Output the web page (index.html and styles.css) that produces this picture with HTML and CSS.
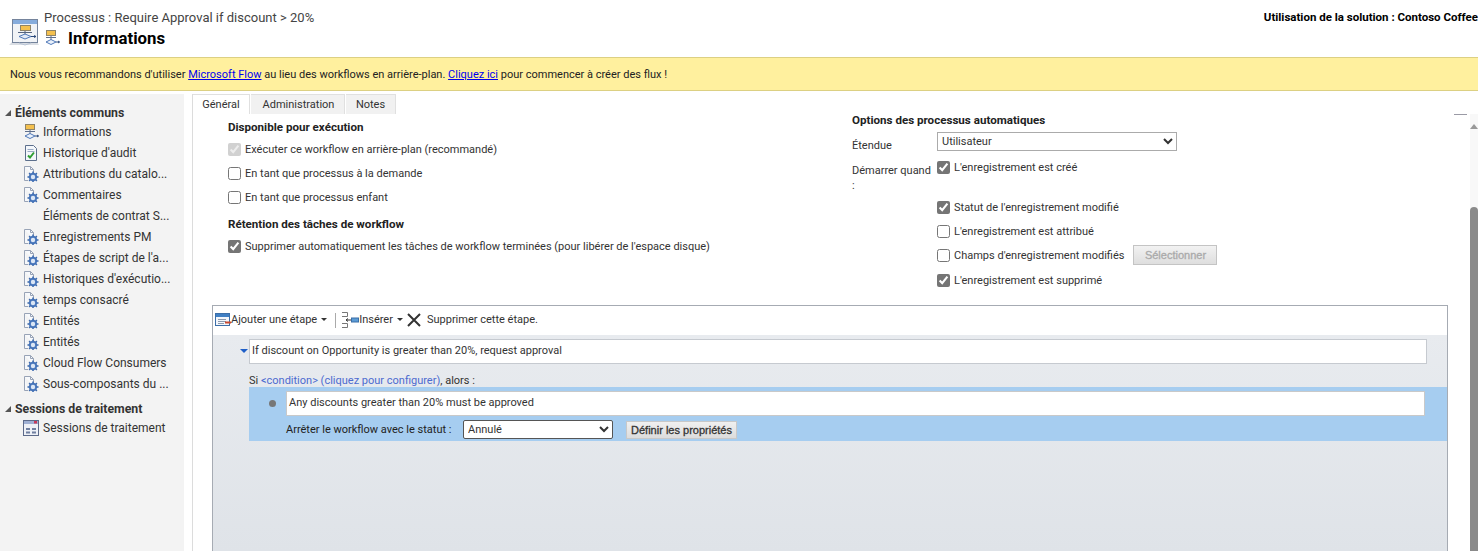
FILE: index.html
```html
<!DOCTYPE html>
<html lang="fr">
<head>
<meta charset="utf-8">
<title>Processus</title>
<link rel="stylesheet" href="styles.css">
</head>
<body>
<svg class="defs" width="0" height="0" aria-hidden="true">
  <symbol id="flow" viewBox="0 0 16 16">
    <rect x="2.500" y="0.500" width="9" height="5" fill="#f4c04e" stroke="#8f8468"/>
    <path d="M7 6v4M2 7.500h10" stroke="#5f6f8c" fill="none"/>
    <path d="M7 9.500l5 2.500-5 2.500-5-2.500z" fill="#eaf1fb" stroke="#4f78b8"/>
    <path d="M12 12h3.500M14 11l1.500 1-1.500 1" stroke="#2c4a7a" fill="none"/>
  </symbol>
  <symbol id="audit" viewBox="0 0 16 16">
    <path d="M2.500 0.500h8l3 3v12h-11z" fill="#f4f7fb" stroke="#5c6f8c"/>
    <path d="M4.500 4.500h6M4.500 6.500h7" stroke="#9aabc4"/>
    <path d="M5 10.500l2 2 4-5" fill="none" stroke="#2f9e32" stroke-width="2"/>
  </symbol>
  <symbol id="gear" viewBox="0 0 16 16">
    <path d="M1.500 0.500h6l3 3v6M5 14.500H1.500v-14" fill="#f7f9fc" stroke="#98a3b6"/>
    <path d="M7.500 0.500v3h3" fill="none" stroke="#98a3b6"/>
    <circle cx="10" cy="11" r="3.200" fill="#dbe6f5" stroke="#4a78bd" stroke-width="2"/>
    <path d="M10 5.500v2M10 14.500v1.500M4.500 11h2M13.500 11h2M6.100 7.100l1.400 1.400M12.500 13.500l1.400 1.400M13.900 7.100l-1.400 1.400M7.500 13.500l-1.400 1.400" stroke="#3a68ad" stroke-width="1.500"/>
  </symbol>
  <symbol id="session" viewBox="0 0 16 16">
    <rect x="0.500" y="0.500" width="15" height="15" fill="#eef1f7" stroke="#5c6a8a"/>
    <rect x="1" y="1" width="14" height="3" fill="#9fb0d4"/>
    <rect x="11" y="1" width="3" height="2.500" fill="#c8395a"/>
    <rect x="3" y="8" width="4" height="2" fill="#6f7fa0"/>
    <rect x="9" y="8" width="4" height="2" fill="#6f7fa0"/>
    <rect x="3" y="11.500" width="4" height="2" fill="#6f7fa0"/>
    <rect x="9" y="11.500" width="4" height="2" fill="#6f7fa0"/>
  </symbol>
</svg>

<header class="page-head">
  <svg class="head-logo" viewBox="0 0 30 30" aria-hidden="true">
    <path d="M0 28l3-3h25l2 3z" fill="#d9dde3"/>
    <rect x="3.500" y="2.500" width="25" height="23" fill="#f1f3f6" stroke="#75849c"/>
    <rect x="4" y="3" width="24" height="4" fill="#86acdc"/>
    <rect x="11.500" y="8.500" width="10" height="5" fill="#f4c04e" stroke="#8f8468"/>
    <path d="M16 14v4M9 15.500h14" stroke="#55647f" fill="none"/>
    <path d="M16 17l6 2.500-6 2.500-6-2.500z" fill="#e3ebf7" stroke="#4f78b8"/>
    <path d="M22 19.500h5M25 18.500l2 1-2 1" stroke="#2c4a7a" fill="none"/>
    <path d="M10 26l6 2 6-2" fill="none" stroke="#b8c4d6"/>
  </svg>
  <div class="head-titles">
    <div class="head-process">Processus : Require Approval if discount &gt; 20%</div>
    <div class="head-form">
      <svg class="ico"><use href="#flow"/></svg>
      <h1>Informations</h1>
    </div>
  </div>
  <div class="head-solution">Utilisation de la solution : Contoso Coffee</div>
</header>

<div class="banner">Nous vous recommandons d'utiliser <a href="#">Microsoft Flow</a> au lieu des workflows en arrière-plan. <a href="#">Cliquez ici</a> pour commencer à créer des flux !</div>

<div class="layout">
  <nav class="side">
    <h2 class="side-head">Éléments communs</h2>
    <ul class="side-list">
      <li><svg class="ico"><use href="#flow"/></svg>Informations</li>
      <li><svg class="ico"><use href="#audit"/></svg>Historique d'audit</li>
      <li><svg class="ico"><use href="#gear"/></svg>Attributions du catalo...</li>
      <li><svg class="ico"><use href="#gear"/></svg>Commentaires</li>
      <li><span class="ico"></span>Éléments de contrat S...</li>
      <li><svg class="ico"><use href="#gear"/></svg>Enregistrements PM</li>
      <li><svg class="ico"><use href="#gear"/></svg>Étapes de script de l'a...</li>
      <li><svg class="ico"><use href="#gear"/></svg>Historiques d'exécutio...</li>
      <li><svg class="ico"><use href="#gear"/></svg>temps consacré</li>
      <li><svg class="ico"><use href="#gear"/></svg>Entités</li>
      <li><svg class="ico"><use href="#gear"/></svg>Entités</li>
      <li><svg class="ico"><use href="#gear"/></svg>Cloud Flow Consumers</li>
      <li><svg class="ico"><use href="#gear"/></svg>Sous-composants du ...</li>
    </ul>
    <h2 class="side-head second">Sessions de traitement</h2>
    <ul class="side-list tight">
      <li><svg class="ico"><use href="#session"/></svg>Sessions de traitement</li>
    </ul>
  </nav>

  <main class="content">
    <div class="tabs">
      <div class="tab tab-general active">Général</div>
      <div class="tab tab-admin">Administration</div>
      <div class="tab tab-notes">Notes</div>
    </div>
    <div class="scroll-area">
      <div class="form">
        <section class="col-left">
          <h3>Disponible pour exécution</h3>
          <label class="chk"><input type="checkbox" checked disabled>Exécuter ce workflow en arrière-plan (recommandé)</label>
          <label class="chk"><input type="checkbox">En tant que processus à la demande</label>
          <label class="chk"><input type="checkbox">En tant que processus enfant</label>
          <h3 class="h-second">Rétention des tâches de workflow</h3>
          <label class="chk"><input type="checkbox" checked>Supprimer automatiquement les tâches de workflow terminées (pour libérer de l'espace disque)</label>
        </section>
        <section class="col-right">
          <h3>Options des processus automatiques</h3>
          <div class="opt-grid">
            <div class="opt-label first">Étendue</div>
            <select class="scope"><option>Utilisateur</option></select>
            <div class="opt-label">Démarrer quand<br>:</div>
            <div class="opt-checks">
              <label class="chk c-created"><input type="checkbox" checked>L'enregistrement est créé</label>
              <label class="chk"><input type="checkbox" checked>Statut de l'enregistrement modifié</label>
              <label class="chk"><input type="checkbox">L'enregistrement est attribué</label>
              <div class="chk-row">
                <label class="chk"><input type="checkbox">Champs d'enregistrement modifiés</label>
                <button class="pick" disabled>Sélectionner</button>
              </div>
              <label class="chk c-last"><input type="checkbox" checked>L'enregistrement est supprimé</label>
            </div>
          </div>
        </section>
      </div>

      <section class="designer">
        <div class="toolbar">
          <span class="tool tool-add">
            <svg class="tool-ico" viewBox="0 0 16 14"><rect x="0.500" y="0.500" width="14" height="12" fill="#f3f6fb" stroke="#3b6ea8"/><rect x="1" y="1" width="13" height="3" fill="#3f7fc4"/><path d="M3 6.500h8M3 8.500h8M3 10.500h6" stroke="#8b99ad"/><path d="M10 9.500h6" stroke="#c9492f" stroke-width="2"/></svg>Ajouter une étape<i class="caret"></i>
          </span>
          <span class="sep"></span>
          <span class="tool">
            <svg class="tool-ico ins" viewBox="0 0 18 16"><path d="M1 0.500h5.500v4H1M1 11.500h5.500v4H1" fill="none" stroke="#777"/><path d="M5 8h5M7 6.500l-2 1.500 2 1.500" fill="none" stroke="#333"/><rect x="10.500" y="6" width="7" height="4" fill="#5b9bd5" stroke="#3b6ea8"/></svg>Insérer<i class="caret"></i>
          </span>
          <span class="tool del">
            <svg class="del-ico" viewBox="0 0 14 14"><path d="M1 1l12 12M13 1L1 13" stroke="#333" stroke-width="2" fill="none"/></svg>Supprimer cette étape.
          </span>
        </div>
        <div class="canvas">
          <div class="stage-row">
            <i class="expand"></i>
            <div class="field stage">If discount on Opportunity is greater than 20%, request approval</div>
          </div>
          <div class="cond">Si <span class="cond-link">&lt;condition&gt; (cliquez pour configurer)</span>, alors :</div>
          <div class="action">
            <div class="action-top">
              <i class="bullet"></i>
              <div class="field action-name">Any discounts greater than 20% must be approved</div>
            </div>
            <div class="action-bottom">
              <span class="status-label">Arrêter le workflow avec le statut :</span>
              <select class="status"><option>Annulé</option></select>
              <button class="props">Définir les propriétés</button>
            </div>
          </div>
        </div>
      </section>
      <div class="scrollbar">
        <span class="sb-cap"></span>
        <i class="sb-up"></i>
        <span class="sb-thumb"></span>
      </div>
    </div>
  </main>
</div>
</body>
</html>
```
FILE: styles.css
```css
* { box-sizing: border-box; }
html, body { margin: 0; height: 551px; overflow: hidden; }
body {
  font-family: Roboto, "Open Sans", "Liberation Sans", sans-serif;
  font-size: 11px;
  color: #2b2b2b;
  background: #fff;
  display: flex;
  flex-direction: column;
}
.defs { position: absolute; }
.page-head { height: 57px; display: flex; flex: none; padding: 9px 0 0 9px; }
.head-logo { width: 30px; height: 30px; margin-top: 8px; flex: none; }
.head-titles { margin-left: 5px; }
.head-process { font-size: 13px; line-height: 18px; color: #444; }
.head-form { display: flex; align-items: center; margin-top: 2px; }
.head-form .ico { margin: 0 8px 0 0; width: 16px; height: 16px; }
h1 { margin: 0; font-size: 16.800px; line-height: 18px; font-weight: 700; color: #000; }
.head-solution { margin-left: auto; white-space: nowrap; font-size: 11.500px; font-weight: 700; color: #000; line-height: 16px; }

.banner {
  height: 34px; flex: none;
  background: #fff09e;
  border-top: 1px solid #dcd083;
  border-bottom: 1px solid #dcd083;
  padding-left: 10px;
  line-height: 33px;
  color: #222;
}
.banner a { color: #0000ee; }

.layout { flex: 1; display: flex; min-height: 0; padding-top: 3px; }
.side { width: 184px; flex: none; background: #f3f3f3; padding-top: 12px; }
.side-head { margin: 0; padding-left: 15px; font-size: 12.300px; line-height: 14px; font-weight: 700; color: #333; position: relative; }
.side-head::before { content: ""; position: absolute; left: 5px; top: 4px; border-style: solid; border-width: 0 0 6px 6px; border-color: transparent transparent #555 transparent; }
.side-head.second { margin-top: 8px; }
.side-list { list-style: none; margin: 0; padding: 1px 0 0; }
.side-list.tight { padding-top: 0; margin-top: 1px; }
.side-list li { height: 21px; display: flex; align-items: center; white-space: nowrap; color: #333; padding-left: 23px; font-size: 12px; }
.ico { width: 16px; height: 16px; margin-right: 4px; flex: none; }

.content { flex: 1; margin-left: 8px; border-left: 1px solid #dcdcdc; display: flex; flex-direction: column; min-width: 0; }
.tabs { display: flex; height: 20px; flex: none; gap: 1px; }
.tab { line-height: 19px; background: #f1f1f1; border-top: 1px solid #e0e0e0; border-right: 1px solid #e0e0e0; color: #333; text-align: center; }
.tab.active { background: #fff; }
.tab-general { width: 57px; }
.tab-admin { width: 94px; padding-left: 2px; }
.tab-notes { width: 50px; }
.scroll-area { flex: 1; position: relative; padding-left: 19px; min-height: 0; display: flex; flex-direction: column; }

.form { display: flex; height: 191px; flex: none; padding-left: 16px; }
.col-left { width: 624px; flex: none; }
h3 { margin: 0; font-size: 11.600px; line-height: 14px; font-weight: 700; color: #222; }
.col-left > h3:first-child { margin-top: 6px; }
.h-second { margin-top: 8px; }
.chk { display: flex; align-items: center; height: 24px; white-space: nowrap; color: #333; }
.chk input { width: 13px; height: 13px; margin: 0 4px 0 0; accent-color: #757575; flex: none; }
.col-left h3 + .chk { margin-top: 3px; }
.col-left .chk:last-child { margin-top: 3px; }

.col-right h3 { margin-top: -1px; }
.opt-grid { display: grid; grid-template-columns: 85px 240px; margin-top: 5px; }
.opt-label { line-height: 15px; padding-top: 10px; color: #333; white-space: nowrap; }
.opt-label.first { padding-top: 6px; }
.scope { height: 19px; width: 240px; font: inherit; color: #333; background: #fff; border: 1px solid #ababab; padding-left: 0; }
.opt-checks { display: flex; flex-direction: column; width: 300px; padding-top: 2px; }
.c-created { height: 24px; margin-bottom: 16px; }
.c-last { margin-top: 1px; }
.chk-row { display: flex; align-items: center; height: 24px; gap: 9px; }
.pick { width: 84px; height: 20px; font-family: "Liberation Sans", sans-serif; font-size: 11px; -webkit-text-stroke: 0.3px; white-space: nowrap; color: #aaa; background: linear-gradient(#f2f2f2, #dedede); border: 1px solid #c4c4c4; padding: 0; }

.designer { width: 1236px; flex: 1; min-height: 0; border: 1px solid #a6abb3; border-bottom: 0; display: flex; flex-direction: column; }
.toolbar { height: 29px; flex: none; display: flex; align-items: center; padding: 0 0 2px 2px; background: #fff; color: #333; }
.tool { display: flex; align-items: center; white-space: nowrap; }
.tool-ico { width: 16px; height: 14px; flex: none; }
.tool-ico.ins { width: 18px; height: 16px; }
.caret { width: 0; height: 0; border-style: solid; border-width: 3px 3px 0; border-color: #333 transparent transparent; margin-left: 4px; }
.sep { width: 1px; height: 15px; background: #aaa; margin: 2px 5px 0 8px; }
.del { margin-left: 4px; }
.del-ico { width: 14px; height: 14px; margin-right: 6px; }
.canvas { flex: 1; background: linear-gradient(#e8ebef, #dfe3e8); padding-top: 4px; }
.stage-row { position: relative; padding-left: 36px; }
.expand { position: absolute; left: 27px; top: 10px; width: 0; height: 0; border-style: solid; border-width: 4px 4px 0; border-color: #1f5fc8 transparent transparent; }
.field { background: #fff; border: 1px solid #c6cad0; white-space: nowrap; color: #333; padding-left: 2px; }
.stage { width: 1178px; height: 25px; line-height: 21px; }
.cond { margin: 9px 0 0 36px; line-height: 15px; color: #333; height: 14px; }
.cond-link { color: #4d6bd0; }
.action { margin-left: 36px; height: 54px; background: #a6cdf0; }
.action-top { display: flex; padding: 4px 0 0 37px; position: relative; }
.bullet { position: absolute; left: 20px; top: 13px; width: 7px; height: 7px; border-radius: 50%; background: #777; }
.action-name { width: 1139px; height: 25px; line-height: 21px; border-color: #c9c9c9; }
.action-bottom { display: flex; align-items: center; height: 23px; padding-left: 37px; margin-top: 2px; color: #222; }
.status-label { width: 177px; flex: none; white-space: nowrap; }
.status { width: 150px; height: 19px; font: inherit; color: #333; background: #fff; border: 1px solid #555; border-radius: 2px; }
.props { margin-left: 13px; width: 111px; height: 18px; font-family: "Liberation Sans", sans-serif; font-size: 11px; -webkit-text-stroke: 0.3px; white-space: nowrap; color: #333; padding: 0; background: linear-gradient(#f0f0f0, #dcdcdc); border: 1px solid #c8c8c8; }

.scrollbar { position: absolute; right: 0; top: 0; bottom: 0; width: 8px; background: #f8f8f8; }
.sb-cap { position: absolute; right: 11px; top: 0; width: 13px; height: 1px; background: #9a9aa5; }
.sb-up { position: absolute; left: 0; top: 10px; width: 0; height: 0; border-style: solid; border-width: 0 4px 5px; border-color: transparent transparent #999; }
.sb-thumb { position: absolute; left: 0; right: 0; top: 93px; bottom: 0; background: #8a8a8a; border-radius: 4px 4px 0 0; }
```
